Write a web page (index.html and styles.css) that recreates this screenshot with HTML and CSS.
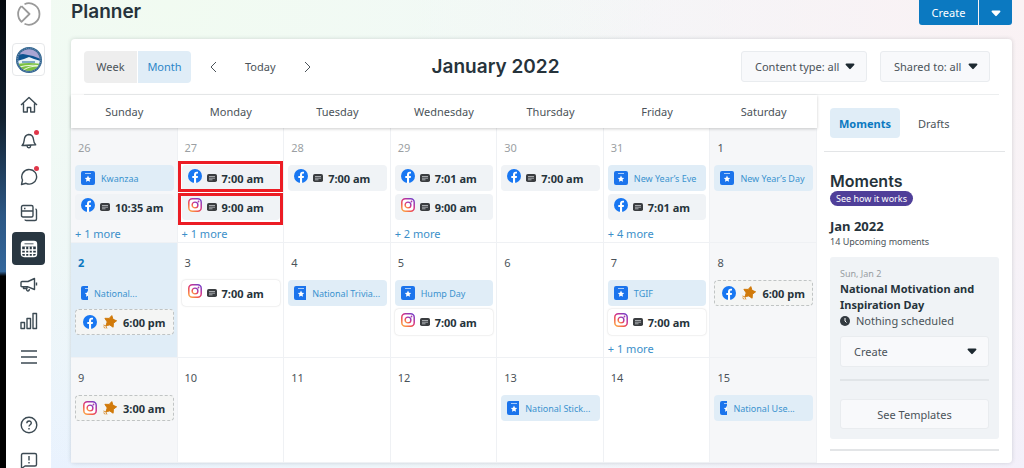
FILE: index.html
```html
<!DOCTYPE html>
<html lang="en">
<head>
    <meta charset="UTF-8">
    <meta name="viewport" content="width=device-width, initial-scale=1.0">
    <title>Planner</title>
    <link rel="stylesheet" href="styles.css">
</head>
<body>
    <!-- shared icons -->
    <svg class="sprite" aria-hidden="true">
        <defs>
            <linearGradient id="ig-grad" x1="0" y1="1" x2="0.8" y2="0">
                <stop offset="0" stop-color="#fdb64a"/>
                <stop offset="0.35" stop-color="#f2584a"/>
                <stop offset="0.65" stop-color="#d0318c"/>
                <stop offset="1" stop-color="#7c3fc4"/>
            </linearGradient>
        </defs>
        <symbol id="i-fb" viewBox="0 0 14 14">
            <circle cx="7" cy="7" r="7" fill="#1877f2"/>
            <path d="M6 14V9H4.300V7H6V5.600c0-1.900 1-2.900 2.700-2.900.7 0 1.300.1 1.300.1v1.600h-.8c-.8 0-1.100.5-1.100 1.100V7h1.900l-.3 2H8.100v5z" fill="#fff"/>
        </symbol>
        <symbol id="i-ig" viewBox="0 0 14 14">
            <rect x="0.800" y="0.800" width="12.400" height="12.400" rx="3.500" fill="#fff" stroke="url(#ig-grad)" stroke-width="1.500"/>
            <circle cx="7" cy="7" r="2.900" fill="none" stroke="url(#ig-grad)" stroke-width="1.400"/>
            <circle cx="10.500" cy="3.500" r="0.900" fill="#b03aa8"/>
        </symbol>
        <symbol id="i-note" viewBox="0 0 10 8">
            <rect width="10" height="8" rx="1.800" fill="#3a3d40"/>
            <path d="M2 2.500h6M2 4.200h6M2 5.800h3.500" stroke="#c4c8ca" stroke-width="0.800"/>
        </symbol>
        <symbol id="i-moment" viewBox="0 0 14 14">
            <rect width="14" height="14" rx="2" fill="#1b74ec"/>
            <path d="M4 2.500h6" stroke="#a9cdfa" stroke-width="1"/>
            <path d="M7 4.600l1 2.100 2.200.3-1.600 1.600.4 2.200-2-1.100-2 1.100.4-2.200L3.800 7 6 6.700z" fill="#fff"/>
        </symbol>
        <symbol id="i-star" viewBox="0 0 14 14">
            <path d="M8.800.6l1.200 3.700 3.600 1.500-3.200 2.400-.3 4-3.300-2.300-3.700.7 1.100-3.700L1.900 3.300l4.300.1z" fill="#d17a0a" stroke="#d17a0a" stroke-width="1" stroke-linejoin="round"/>
            <path d="M.4 10a3.500 3.500 0 0 1 3.500 3.500M.4 11.800a1.700 1.700 0 0 1 1.700 1.700" fill="none" stroke="#d17a0a" stroke-width="0.800"/>
        </symbol>
        <symbol id="i-caret" viewBox="0 0 8 6">
            <path d="M1 .5h6c.8 0 1 .7.6 1.200L4.600 5c-.4.5-.8.5-1.200 0L.4 1.700C0 1.200.2.5 1 .5z" fill="currentColor"/>
        </symbol>
    </svg>

    <div class="desktop-edge"></div>

    <nav class="sidebar">
        <svg class="logo" viewBox="0 0 24 24"><path d="M7.500 2.200A10.700 10.700 0 1 1 7.500 21.800M4.500 4.200A10.700 10.700 0 0 0 4.500 19.800L12.500 12 4.500 4.200" fill="none" stroke="#9a9a9a" stroke-width="1.800" stroke-linejoin="round"/></svg>
        <a class="avatar" href="#" aria-label="Organization">
            <svg viewBox="0 0 26 26">
                <defs><clipPath id="seal"><circle cx="13" cy="13" r="10.800"/></clipPath></defs>
                <circle cx="13" cy="13" r="13" fill="#2b5f8c"/>
                <circle cx="13" cy="13" r="11.800" fill="none" stroke="#8fb0c8" stroke-width="0.800" stroke-dasharray="1 1"/>
                <g clip-path="url(#seal)">
                    <path d="M0 0h26v26H0z" fill="#a9a5d3"/>
                    <path d="M1 8l6-1 5 1 5 1 8 3v5H1z" fill="#0f5490"/>
                    <path d="M1 14l7-2 5-2 5 2 7 2v4H1z" fill="#eaf3f7"/>
                    <path d="M6 14h13v2H6z" fill="#7fa9c4"/>
                    <path d="M1 17q12-2 24 0v9H1z" fill="#7cc142"/>
                    <path d="M2 20.500q9-3 20-2M6 24q6-5 17-5" fill="none" stroke="#e8f5d9" stroke-width="1.200"/>
                </g>
            </svg>
        </a>
        <ul class="nav-list">
            <li><a href="#" aria-label="Home"><svg viewBox="0 0 18 18"><path d="M1 9L9 1.500 17 9M3.500 7.500V16h3.800v-4.500h3.400V16h3.800V7.500"/></svg></a></li>
            <li><a href="#" aria-label="Notifications"><svg viewBox="0 0 18 18"><path d="M2 13.500c2-1.500 2-3 2.300-6C4.600 4.500 6.200 3 8.500 2.500c3 0 4.700 1.800 5 5 .2 2.500.5 4 2.200 5.300zM7 13.800c.2 2.700 3.500 2.700 3.800-.3"/></svg><span class="dot"></span></a></li>
            <li><a href="#" aria-label="Inbox"><svg viewBox="0 0 18 18"><path d="M9.500 1.500a7.300 7.300 0 1 1-3.500 13.800L1.500 16.500l1-4.500A7.300 7.300 0 0 1 9.500 1.500z"/></svg><span class="dot"></span></a></li>
            <li><a href="#" aria-label="Streams"><svg viewBox="0 0 18 18"><path d="M3 1.500h8.500q1.500 0 1.500 1.500v8.500q0 1.500-1.500 1.500H3q-1.500 0-1.500-1.500V3q0-1.500 1.500-1.500zM1.500 7H13M4 4.500h1.500M15.500 5q1 .2 1 1.500v8.500q0 1.500-1.500 1.500H6.500q-1.500 0-1.500-1"/></svg></a></li>
            <li><a class="active" href="#" aria-label="Planner"><svg viewBox="0 0 18 18"><path d="M4 1.500h10q2.500 0 2.500 2.500v10q0 2.500-2.500 2.500H4q-2.500 0-2.500-2.500V4q0-2.500 2.500-2.500z"/><path d="M2 2h14v4.500H2z" fill="#fff" stroke="none"/><path d="M1.500 10h15M1.500 13.300h15M5.500 6.500v10M9 6.500v10M12.500 6.500v10"/><path d="M4.500 3.800h9" stroke="#293742" stroke-width="0.800"/></svg></a></li>
            <li><a href="#" aria-label="Advertise"><svg viewBox="0 0 18 18"><path d="M2 5.500h6l6.500-3v11L8 10.800H2q-1 0-1-1v-3.300q0-1 1-1zM3.500 11v1.500H7V11M6.500 13c.2 3 3 2.500 2.800 0M16.500 6.500v3"/></svg></a></li>
            <li><a href="#" aria-label="Analytics"><svg viewBox="0 0 18 18"><path d="M1 10.500h3.500v6H1zM7 6.500h3.500v10H7zM13 1.500h3.500v15H13z"/></svg></a></li>
            <li><a href="#" aria-label="Menu"><svg viewBox="0 0 18 18"><path d="M1 3h16M1 9h16M1 15h16"/></svg></a></li>
        </ul>
        <ul class="nav-list nav-foot">
            <li><a href="#" aria-label="Help"><svg viewBox="0 0 18 18"><circle cx="9" cy="9" r="7.800"/><path d="M6.800 7.200C6.900 4.200 11.300 4.300 11.300 7c0 1.700-2.300 1.700-2.300 3.500M9 12v1.500"/></svg></a></li>
            <li><a href="#" aria-label="Feedback"><svg viewBox="0 0 18 18"><path d="M3 1.500h12q1.500 0 1.500 1.500v9.500q0 1.500-1.500 1.500H5l-3.500 2.500V3q0-1.500 1.500-1.500zM9 4v4.500M9 10v1.500"/></svg></a></li>
        </ul>
    </nav>

    <main class="main">
        <header class="topbar">
            <h1>Planner</h1>
            <div class="split-button">
                <button type="button">Create</button>
                <button type="button" class="split-caret" aria-label="More create options"><svg class="caret"><use href="#i-caret"/></svg></button>
            </div>
        </header>

        <section class="planner">
            <div class="toolbar">
                <div class="view-switch">
                    <button type="button">Week</button>
                    <button type="button" class="selected">Month</button>
                </div>
                <div class="date-nav">
                    <button type="button" aria-label="Previous month"><svg viewBox="0 0 8 12"><path d="M7 1L2 6l5 5"/></svg></button>
                    <button type="button">Today</button>
                    <button type="button" aria-label="Next month"><svg viewBox="0 0 8 12"><path d="M1 1l5 5-5 5"/></svg></button>
                </div>
                <h2>January 2022</h2>
                <div class="filters">
                    <div class="select-box filter-type">
                        <select aria-label="Content type"><option>Content type: all</option></select>
                        <svg class="caret"><use href="#i-caret"/></svg>
                    </div>
                    <div class="select-box filter-shared">
                        <select aria-label="Shared to"><option>Shared to: all</option></select>
                        <svg class="caret"><use href="#i-caret"/></svg>
                    </div>
                </div>
            </div>

            <div class="board">
                <table class="calendar">
                    <thead>
                        <tr><th>Sunday</th><th>Monday</th><th>Tuesday</th><th>Wednesday</th><th>Thursday</th><th>Friday</th><th>Saturday</th></tr>
                    </thead>
                    <tbody>
                        <tr>
                            <td class="weekend past">
                                <div class="date">26</div>
                                <div class="chip moment"><svg class="badge"><use href="#i-moment"/></svg><span>Kwanzaa</span></div>
                                <div class="chip"><svg class="net"><use href="#i-fb"/></svg><svg class="note"><use href="#i-note"/></svg><b>10:35 am</b></div>
                                <a class="more" href="#">+ 1 more</a>
                            </td>
                            <td class="past">
                                <div class="date">27</div>
                                <div class="chip marked marked-first"><svg class="net"><use href="#i-fb"/></svg><svg class="note"><use href="#i-note"/></svg><b>7:00 am</b></div>
                                <div class="chip marked marked-second"><svg class="net"><use href="#i-ig"/></svg><svg class="note"><use href="#i-note"/></svg><b>9:00 am</b></div>
                                <a class="more" href="#">+ 1 more</a>
                            </td>
                            <td class="past">
                                <div class="date">28</div>
                                <div class="chip"><svg class="net"><use href="#i-fb"/></svg><svg class="note"><use href="#i-note"/></svg><b>7:00 am</b></div>
                            </td>
                            <td class="past">
                                <div class="date">29</div>
                                <div class="chip"><svg class="net"><use href="#i-fb"/></svg><svg class="note"><use href="#i-note"/></svg><b>7:01 am</b></div>
                                <div class="chip"><svg class="net"><use href="#i-ig"/></svg><svg class="note"><use href="#i-note"/></svg><b>9:00 am</b></div>
                                <a class="more" href="#">+ 2 more</a>
                            </td>
                            <td class="past">
                                <div class="date">30</div>
                                <div class="chip"><svg class="net"><use href="#i-fb"/></svg><svg class="note"><use href="#i-note"/></svg><b>7:00 am</b></div>
                            </td>
                            <td class="past">
                                <div class="date">31</div>
                                <div class="chip moment"><svg class="badge"><use href="#i-moment"/></svg><span>New Year’s Eve</span></div>
                                <div class="chip"><svg class="net"><use href="#i-fb"/></svg><svg class="note"><use href="#i-note"/></svg><b>7:01 am</b></div>
                                <a class="more" href="#">+ 4 more</a>
                            </td>
                            <td class="weekend">
                                <div class="date">1</div>
                                <div class="chip moment"><svg class="badge"><use href="#i-moment"/></svg><span>New Year’s Day</span></div>
                            </td>
                        </tr>
                        <tr>
                            <td class="today">
                                <div class="date">2</div>
                                <div class="chip moment"><span class="crop crop-s"><svg class="badge"><use href="#i-moment"/></svg></span><span>National...</span></div>
                                <div class="chip suggested"><svg class="net"><use href="#i-fb"/></svg><svg class="star"><use href="#i-star"/></svg><b>6:00 pm</b></div>
                            </td>
                            <td>
                                <div class="date">3</div>
                                <div class="chip upcoming"><svg class="net"><use href="#i-ig"/></svg><svg class="note"><use href="#i-note"/></svg><b>7:00 am</b></div>
                            </td>
                            <td>
                                <div class="date">4</div>
                                <div class="chip moment"><span class="crop crop-l"><svg class="badge"><use href="#i-moment"/></svg></span><span>National Trivia...</span></div>
                            </td>
                            <td>
                                <div class="date">5</div>
                                <div class="chip moment"><svg class="badge"><use href="#i-moment"/></svg><span>Hump Day</span></div>
                                <div class="chip upcoming"><svg class="net"><use href="#i-ig"/></svg><svg class="note"><use href="#i-note"/></svg><b>7:00 am</b></div>
                            </td>
                            <td>
                                <div class="date">6</div>
                            </td>
                            <td>
                                <div class="date">7</div>
                                <div class="chip moment"><svg class="badge"><use href="#i-moment"/></svg><span>TGIF</span></div>
                                <div class="chip upcoming"><svg class="net"><use href="#i-ig"/></svg><svg class="note"><use href="#i-note"/></svg><b>7:00 am</b></div>
                                <a class="more" href="#">+ 1 more</a>
                            </td>
                            <td class="weekend">
                                <div class="date">8</div>
                                <div class="chip suggested"><svg class="net"><use href="#i-fb"/></svg><svg class="star"><use href="#i-star"/></svg><b>6:00 pm</b></div>
                            </td>
                        </tr>
                        <tr class="last">
                            <td class="weekend">
                                <div class="date">9</div>
                                <div class="chip suggested"><svg class="net"><use href="#i-ig"/></svg><svg class="star"><use href="#i-star"/></svg><b>3:00 am</b></div>
                            </td>
                            <td><div class="date">10</div></td>
                            <td><div class="date">11</div></td>
                            <td><div class="date">12</div></td>
                            <td>
                                <div class="date">13</div>
                                <div class="chip moment"><span class="crop crop-l"><svg class="badge"><use href="#i-moment"/></svg></span><span>National Stick...</span></div>
                            </td>
                            <td><div class="date">14</div></td>
                            <td class="weekend">
                                <div class="date">15</div>
                                <div class="chip moment"><span class="crop crop-s"><svg class="badge"><use href="#i-moment"/></svg></span><span>National Use...</span></div>
                            </td>
                        </tr>
                    </tbody>
                </table>

                <aside class="panel">
                    <div class="tabs">
                        <button type="button" class="selected">Moments</button>
                        <button type="button">Drafts</button>
                    </div>
                    <div class="panel-body">
                        <h2>Moments</h2>
                        <a class="pill" href="#">See how it works</a>
                        <h3>Jan 2022</h3>
                        <p class="count">14 Upcoming moments</p>
                        <article class="moment-card">
                            <p class="day">Sun, Jan 2</p>
                            <h4>National Motivation and Inspiration Day</h4>
                            <p class="status"><svg viewBox="0 0 10 10"><circle cx="5" cy="5" r="5" fill="#333a40"/><path d="M5 2v3l1.500 1.500" fill="none" stroke="#fff" stroke-width="1"/></svg>Nothing scheduled</p>
                            <div class="select-box">
                                <select aria-label="Create for this moment"><option>Create</option></select>
                                <svg class="caret"><use href="#i-caret"/></svg>
                            </div>
                            <hr>
                            <button type="button" class="templates">See Templates</button>
                        </article>
                    </div>
                </aside>
            </div>
        </section>
    </main>
</body>
</html>
```
FILE: styles.css
```css
* {
    margin: 0;
    padding: 0;
    box-sizing: border-box;
}

body {
    display: flex;
    height: 100vh;
    overflow: hidden;
    font-family: "Noto Sans", "Open Sans", sans-serif;
    font-size: 11px;
    color: #4b5359;
    background: #fff;
}

button,
select {
    font: inherit;
    color: inherit;
    border: none;
    background: none;
    cursor: pointer;
}

a {
    color: inherit;
    text-decoration: none;
}

h1, h2, h3, h4 {
    color: #26333b;
}

h1, h2 {
    font-family: Inter, "Noto Sans", sans-serif;
    font-weight: 600;
}

.sprite {
    position: absolute;
    width: 0;
    height: 0;
}

.desktop-edge {
    flex: none;
    width: 6px;
    background: linear-gradient(#05090e, #12202e 25%, #2c5784 46%, #34679b 58%, #000 59%);
}

/* sidebar */
.sidebar {
    flex: none;
    display: flex;
    flex-direction: column;
    align-items: center;
    width: 45px;
    padding-top: 2px;
    background: #fff;
}

.logo {
    flex: none;
    width: 24px;
    height: 24px;
}

.avatar {
    flex: none;
    display: flex;
    align-items: center;
    justify-content: center;
    width: 33px;
    height: 33px;
    margin: 17px 0 12px;
    border: 1px solid #e6e8ea;
    border-radius: 4px;
}

.avatar svg {
    width: 26px;
    height: 26px;
}

.nav-list {
    display: flex;
    flex-direction: column;
    gap: 3px;
    list-style: none;
}

.nav-list a {
    position: relative;
    display: flex;
    align-items: center;
    justify-content: center;
    width: 33px;
    height: 33px;
    border-radius: 4px;
}

.nav-list svg {
    width: 18px;
    height: 18px;
    fill: none;
    stroke: #3c4a53;
    stroke-width: 1.400;
    stroke-linejoin: round;
}

.nav-list a.active {
    background: #293742;
}

.nav-list a.active svg {
    stroke: #fff;
}

.nav-foot {
    margin-top: 35px;
}

.dot {
    position: absolute;
    top: 6px;
    right: 6px;
    width: 5px;
    height: 5px;
    border-radius: 50%;
    background: #e0374a;
}

/* main area */
.main {
    flex: 1;
    min-width: 0;
    padding: 0 12px 0 20px;
    background:
        radial-gradient(circle at 12% 0, #f1fbf1, transparent 50%),
        radial-gradient(circle at 0 100%, #e9f2fe, transparent 45%),
        radial-gradient(circle at 100% 0, #faf2f4, transparent 60%),
        radial-gradient(circle at 100% 100%, #f0effc, transparent 60%),
        #f2f8f9;
}

.topbar {
    display: flex;
    justify-content: space-between;
    align-items: flex-start;
    height: 39px;
}

.topbar h1 {
    font-size: 19px;
    line-height: 24px;
}

.split-button {
    display: flex;
    gap: 1px;
}

.split-button button {
    width: 59px;
    height: 25px;
    border-radius: 0 0 0 3px;
    background: #0b79c1;
    color: #fff;
}

.split-button .split-caret {
    width: 33px;
    border-radius: 0 0 3px 0;
}

.caret {
    width: 10px;
    height: 7px;
}

.planner {
    border-radius: 4px;
    background: #fff;
    box-shadow: 0 0 4px rgba(40, 50, 60, 0.18);
}

.toolbar {
    display: flex;
    align-items: center;
    height: 56px;
    margin: 0 13px;
    padding-right: 9px;
    border-bottom: 1px solid #eceeef;
}

.toolbar h2 {
    margin-left: 120px;
    font-size: 19px;
    line-height: 24px;
}

.view-switch {
    display: flex;
    gap: 1px;
}

.view-switch button {
    width: 53px;
    height: 32px;
    border-radius: 4px 0 0 4px;
    background: #eee;
}

.view-switch .selected {
    border-radius: 0 4px 4px 0;
    background: #e0edf7;
    color: #2d86c8;
}

.date-nav {
    display: flex;
    align-items: center;
    gap: 28px;
    margin-left: 18px;
}

.date-nav svg {
    display: block;
    width: 8px;
    height: 12px;
    fill: none;
    stroke: #4b5359;
}

.filters {
    display: flex;
    gap: 13px;
    margin-left: auto;
}

.select-box {
    position: relative;
}

.select-box select {
    display: block;
    width: 100%;
    height: 31px;
    padding: 0 13px;
    border: 1px solid #e9ecef;
    border-radius: 3px;
    background: #f8f9fb;
    appearance: none;
}

.select-box .caret {
    position: absolute;
    top: 12px;
    right: 12px;
    color: #1d2930;
    pointer-events: none;
}

.filter-type {
    width: 126px;
}

.filter-shared {
    width: 110px;
}

.board {
    display: grid;
    grid-template-columns: minmax(0, 1fr) 195px;
}

/* calendar */
.calendar {
    width: 100%;
    table-layout: fixed;
    border-spacing: 0;
}

.calendar thead {
    position: relative;
    z-index: 1;
    background: #fff;
    box-shadow: 0 1px 3px rgba(0, 0, 0, 0.2);
}

.calendar th {
    height: 33px;
    font-weight: 400;
}

.calendar td {
    height: 115px;
    padding: 10px 3px 0 4px;
    border-right: 1px solid #eff1f4;
    border-bottom: 1px solid #eff1f4;
    vertical-align: top;
}

.calendar .last td {
    height: 105px;
}

.calendar .weekend {
    background: #f6f7f9;
}

.calendar .today {
    background: #e0edf7;
}

.date {
    margin-bottom: 7px;
    padding-left: 3px;
    line-height: 20px;
}

.past .date {
    color: #9b9fa3;
}

.today .date {
    font-weight: 700;
    color: #0b79c1;
}

.chip {
    position: relative;
    display: flex;
    align-items: center;
    height: 26px;
    margin-bottom: 3px;
    padding-left: 6px;
    border-radius: 4px;
    background: #f0f3f6;
    white-space: nowrap;
}

.chip svg {
    flex: none;
}

.chip b {
    color: #26333b;
}

.chip .net {
    width: 14px;
    height: 14px;
    margin-bottom: 4px;
}

.chip .note {
    width: 10px;
    height: 8px;
    margin: 0 5px;
}

.chip .badge {
    display: block;
    width: 14px;
    height: 14px;
}

.moment {
    gap: 6px;
    background: #e0edf7;
    color: #3b93cf;
    font-size: 9px;
}

.crop {
    overflow: hidden;
}

.crop-s {
    width: 7px;
}

.crop-l {
    width: 12px;
}

.upcoming {
    background: #fff;
    box-shadow: 0 0 2px rgba(0, 0, 0, 0.2);
}

.chip.suggested {
    gap: 6px;
    padding-left: 7px;
    border: 1px dashed #c0c4c4;
    background: #f4f5f4;
}

.suggested .net {
    margin-bottom: 0;
}

.suggested .star {
    width: 14px;
    height: 14px;
}

.marked::after {
    content: "";
    position: absolute;
    border: 3px solid #ec1c24;
}

.marked-first::after {
    inset: -4px -3px -1px -4px;
}

.marked-second::after {
    inset: -1px -3px -5px -4px;
}

.more {
    display: block;
    margin-top: 6px;
    line-height: 16px;
    color: #3b8fc9;
}

/* side panel */
.panel {
    padding: 13px 7px 0;
}

.tabs {
    display: flex;
    gap: 18px;
    padding: 0 6px 13px;
    border-bottom: 1px solid #e3e5e7;
}

.tabs button {
    height: 30px;
    border-radius: 4px;
}

.tabs .selected {
    width: 70px;
    background: #e0edf7;
    color: #0b79c1;
    font-weight: 700;
}

.panel-body {
    margin: 0 6px;
    padding: 19px 0 10px;
    border-bottom: 2px solid #e3e5e7;
}

.panel-body h2 {
    font-size: 16px;
    line-height: 20px;
}

.pill {
    display: block;
    width: 83px;
    border-radius: 8px;
    background: #4f3f99;
    color: #fff;
    font-size: 9px;
    line-height: 15px;
    text-align: center;
}

.panel-body h3 {
    margin-top: 12px;
    font-size: 13px;
    line-height: 16px;
}

.count {
    font-size: 9px;
    line-height: 15px;
}

.moment-card {
    margin-top: 8px;
    padding: 10px;
    border-radius: 3px;
    background: #f0f3f6;
}

.day {
    font-size: 9px;
    line-height: 14px;
    color: #979da2;
}

.moment-card h4 {
    font-size: 11px;
    line-height: 16px;
}

.status {
    display: flex;
    align-items: center;
    gap: 6px;
    margin-bottom: 7px;
    line-height: 16px;
}

.status svg {
    width: 10px;
    height: 10px;
}

.moment-card hr {
    margin: 12px 0 18px;
    border: none;
    border-top: 2px solid #e1e5e8;
}

.templates {
    display: block;
    width: 100%;
    height: 30px;
    border: 1px solid #e9ecef;
    border-radius: 3px;
    background: #f8f9fb;
}
```
